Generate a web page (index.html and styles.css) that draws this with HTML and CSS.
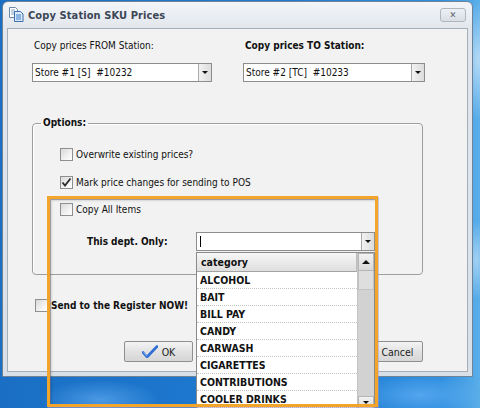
FILE: index.html
```html
<!DOCTYPE html>
<html>
<head>
<meta charset="utf-8">
<title>Copy Station SKU Prices</title>
<link rel="stylesheet" href="styles.css">
</head>
<body>
<div class="window">
  <div class="titlebar">
    <svg class="app-icon" width="15" height="15" viewBox="0 0 15 15">
      <path d="M0.5 0.5h6l2 2v8h-8z" fill="#fff" stroke="#6c88a8"/>
      <path d="M2 3h4M2 5h5M2 7h5" stroke="#8aa4c4" stroke-width="1"/>
      <path d="M5.5 4.5h6l2.5 2.5v7.5h-8.5z" fill="#dbe9f8" stroke="#3c6fb0"/>
      <path d="M7 8h5M7 10h5M7 12h5" stroke="#3f7fd0" stroke-width="1"/>
    </svg>
    <span class="title">Copy Station SKU Prices</span>
    <div class="close">&#x2715;</div>
  </div>
  <div class="client">
    <div class="stations">
      <div class="field from">
        <div class="field-label">Copy prices FROM Station:</div>
        <div class="combo">
          <span class="combo-text">Store #1 [S]&nbsp; #10232</span>
          <span class="combo-btn"><i class="tri-down"></i></span>
        </div>
      </div>
      <div class="field to">
        <div class="field-label bold">Copy prices TO Station:</div>
        <div class="combo">
          <span class="combo-text">Store #2 [TC]&nbsp; #10233</span>
          <span class="combo-btn"><i class="tri-down"></i></span>
        </div>
      </div>
    </div>

    <fieldset class="options">
      <legend>Options:</legend>
      <div class="opt-list">
        <div class="opt-row"><span class="cb"></span><span>Overwrite existing prices?</span></div>
        <div class="opt-row second"><span class="cb checked"><svg width="11" height="11" viewBox="0 0 11 11"><path d="M1.5 5.5l2.5 3 5.5-7" fill="none" stroke="#2b2b2b" stroke-width="1.8"/></svg></span><span>Mark price changes for sending to POS</span></div>
        <div class="opt-row"><span class="cb"></span><span>Copy All Items</span></div>
      </div>
      <div class="dept-row">
        <span class="dept-label">This dept. Only:</span>
        <div class="combo dept-combo">
          <span class="combo-text"><i class="caret"></i></span>
          <span class="combo-btn"><i class="tri-down"></i></span>
          <div class="dropdown">
            <div class="dd-body">
              <div class="dd-head">category</div>
              <div class="dd-row">ALCOHOL</div>
              <div class="dd-row">BAIT</div>
              <div class="dd-row">BILL PAY</div>
              <div class="dd-row">CANDY</div>
              <div class="dd-row">CARWASH</div>
              <div class="dd-row">CIGARETTES</div>
              <div class="dd-row">CONTRIBUTIONS</div>
              <div class="dd-row">COOLER DRINKS</div>
            </div>
            <div class="dd-scroll">
              <div class="sb-btn"><i class="tri-up"></i></div>
              <div class="sb-thumb"></div>
              <div class="sb-track"></div>
              <div class="sb-btn down"><i class="tri-down"></i></div>
            </div>
          </div>
        </div>
      </div>
    </fieldset>

    <div class="send-row"><span class="cb"></span><span class="bold">Send to the Register NOW!</span></div>

    <div class="buttons">
      <button class="btn">
        <svg width="16" height="13" viewBox="0 0 16 13"><path d="M1 7.5l4 4.5L15 1.5" fill="none" stroke="#2f6fd6" stroke-width="2.6" stroke-linecap="round" stroke-linejoin="round"/><path d="M1.5 7.5l3.5 3.8" stroke="#9cc3f2" stroke-width="0.8"/></svg>
        <span>OK</span>
      </button>
      <button class="btn">
        <svg width="14" height="13" viewBox="0 0 14 13"><path d="M2 2l10 9M12 2L2 11" stroke="#c83030" stroke-width="2.4" stroke-linecap="round"/></svg>
        <span>Cancel</span>
      </button>
    </div>
  </div>
</div>
<div class="highlight"></div>
</body>
</html>
```

FILE: styles.css
```css
* { box-sizing: border-box; }
html, body { margin: 0; padding: 0; }
body {
  width: 480px;
  height: 408px;
  overflow: hidden;
  position: relative;
  font-family: "DejaVu Sans Condensed", "DejaVu Sans", sans-serif;
  font-size: 10px;
  color: #111;
  background:
    radial-gradient(ellipse 20px 60px at 478px 60px, rgba(255,255,255,0.55), rgba(255,255,255,0) 100%),
    radial-gradient(ellipse 14px 40px at 476px 260px, rgba(255,255,255,0.45), rgba(255,255,255,0) 100%),
    radial-gradient(ellipse 60px 20px at 100px 400px, rgba(120,190,255,0.5), rgba(255,255,255,0) 100%),
    radial-gradient(ellipse 60px 20px at 420px 395px, rgba(120,190,255,0.5), rgba(255,255,255,0) 100%),
    linear-gradient(to right, #1a6fc4 0%, #1f7bd2 60%, #2f8ede 92%, #5aaee9 100%);
}

.window {
  margin: 1px 0 0 2px;
  width: 471px;
  height: 376px;
  display: flex;
  flex-direction: column;
  padding: 0 4px 4px;
  border: 1px solid #6f8398;
  border-radius: 6px 6px 0 0;
  background: linear-gradient(#f3f5f8 0, #e2e7ed 26px, #d8dfe7 100%);
}

.titlebar {
  height: 26px;
  display: flex;
  align-items: center;
  flex: none;
}
.app-icon { margin-left: 2px; margin-top: -1px; flex: none; }
.title {
  margin-left: 4px;
  font-family: "DejaVu Sans Condensed", "DejaVu Sans", sans-serif;
  font-weight: bold;
  font-size: 11px;
  color: #3b4656;
  letter-spacing: 0.1px;
}
.close {
  margin-left: auto;
  margin-right: 2px;
  align-self: flex-start;
  margin-top: 6px;
  width: 26px;
  height: 14px;
  border: 1px solid #aeb6c0;
  border-radius: 3px;
  background: linear-gradient(#eef1f4, #d9dee4);
  color: #5a6470;
  font-size: 9px;
  line-height: 12px;
  text-align: center;
  font-weight: bold;
}

.client {
  flex: 1;
  background: #f2f2f2;
  border: 1px solid #a6afb9;
  padding: 10px 0 0 24px;
}

.stations { display: flex; gap: 31px; }
.field-label { height: 14px; line-height: 14px; padding-left: 2px; margin-bottom: 10px; }
.bold { font-weight: bold; }
.from .combo { width: 180px; }
.to .combo { width: 182px; }

.combo {
  position: relative;
  height: 19px;
  display: flex;
  border: 1px solid #8d8d8d;
  background: #fff;
}
.combo-text { flex: 1; line-height: 17px; padding-left: 2px; white-space: nowrap; }
.combo-btn {
  width: 13px;
  border-left: 1px solid #a8a8a8;
  background: linear-gradient(to right, #f2f2f2, #dcdcdc);
  display: flex;
  align-items: center;
  justify-content: center;
}
.tri-down {
  width: 0; height: 0;
  border-left: 3px solid transparent;
  border-right: 3px solid transparent;
  border-top: 3px solid #111;
}
.tri-up {
  width: 0; height: 0;
  border-left: 4px solid transparent;
  border-right: 4px solid transparent;
  border-bottom: 4px solid #111;
}

.options {
  margin: 34px 0 0 0;
  width: 391px;
  padding: 18px 0 23px 27px;
  border: 1px solid #9e9e9e;
  border-radius: 4px;
  box-shadow: 1px 1px 0 #fff inset;
}
.options legend {
  margin-left: -19px;
  padding: 0 2px;
  line-height: 14px;
  font-weight: bold;
}
.opt-list { display: flex; flex-direction: column; gap: 14px; }
.opt-row { height: 13px; display: flex; align-items: center; gap: 3px; line-height: 13px; }
.opt-row.second { margin-top: 1px; }

.cb {
  width: 13px;
  height: 13px;
  flex: none;
  border: 1px solid #8e8f8f;
  background: linear-gradient(135deg, #d9d9d9, #f6f6f6 70%, #fff);
  display: flex;
  align-items: center;
  justify-content: center;
}

.dept-row { display: flex; align-items: center; margin-top: 16px; }
.dept-label { width: 109px; flex: none; font-weight: bold; margin-left: 27px; }
.dept-combo { width: 179px; }
.caret { display: inline-block; width: 1px; height: 11px; background: #000; margin: 3px 0 0 1px; vertical-align: top; }

.dropdown {
  position: absolute;
  left: -1px;
  top: 19px;
  width: 179px;
  height: 160px;
  display: flex;
  border: 1px solid #8a8a8a;
  background: #fff;
  z-index: 2;
}
.dd-body { width: 160px; flex: none; }
.dd-head {
  height: 19px;
  line-height: 18px;
  padding-left: 4px;
  font-weight: bold;
  font-size: 10.5px;
  background: linear-gradient(#f7f7f7, #dedede);
  border-bottom: 1px solid #a3a3a3;
  border-right: 1px solid #bdbdbd;
}
.dd-row {
  height: 17px;
  line-height: 16px;
  padding-left: 3px;
  font-weight: bold;
  font-size: 10.5px;
  border-bottom: 1px dotted #c4c4c4;
}
.dd-scroll {
  flex: 1;
  display: flex;
  flex-direction: column;
  background: #d2d2d2;
  border-left: 1px solid #c4c4c4;
}
.sb-btn {
  height: 18px;
  flex: none;
  display: flex;
  align-items: center;
  justify-content: center;
  background: linear-gradient(#f2f2f2, #d9d9d9);
  border: 1px solid #b5b5b5;
}
.sb-btn.down { height: 13px; }
.sb-thumb { height: 19px; flex: none; background: #dedede; border: 1px solid #c2c2c2; border-top: none; }
.sb-track { height: 106px; flex: none; background: #d2d2d2; }

.send-row { display: flex; align-items: center; gap: 3px; margin: 24px 0 0 3px; height: 13px; line-height: 13px; }

.buttons {
  display: flex;
  justify-content: space-between;
  margin: 29px 0 0 92px;
  width: 299px;
}
.btn {
  width: 69px;
  height: 21px;
  padding: 0;
  display: flex;
  align-items: center;
  justify-content: center;
  gap: 4px;
  border: 1px solid #8f8f8f;
  border-radius: 2px;
  background: linear-gradient(#f4f4f4, #e2e2e2 50%, #d6d6d6);
  font-family: "DejaVu Sans Condensed", "DejaVu Sans", sans-serif;
  font-size: 10.5px;
  color: #222;
}

.highlight {
  position: absolute;
  left: 47px;
  top: 196px;
  width: 331px;
  height: 211px;
  border: 3px solid #f3a42a;
  box-shadow: inset 1px 1px 0 rgba(110,110,120,0.55), inset 2px 2px 2px rgba(0,0,0,0.12), 1px 1px 0 rgba(170,150,190,0.5);
  z-index: 3;
  pointer-events: none;
}
```
